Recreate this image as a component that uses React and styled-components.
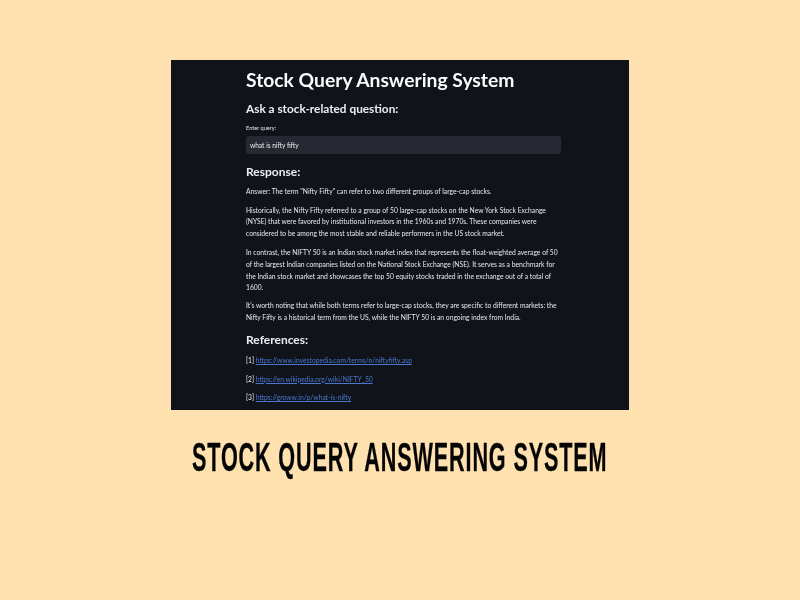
import React from "react";
import styled, { createGlobalStyle } from "styled-components";

const Global = createGlobalStyle`
  html, body { margin: 0; padding: 0; background: #ffe1af; }
  #root { width: 800px; height: 600px; }
`;

const Page = styled.div`
  width: 800px;
  height: 600px;
  background: #ffe1af;
  display: flex;
  flex-direction: column;
  align-items: center;
  padding-top: 60px;
  box-sizing: border-box;
  overflow: hidden;
`;

const Shot = styled.div`
  width: 458px;
  height: 350px;
  background: #11131a;
  overflow: hidden;
  display: flex;
  justify-content: center;
  font-family: "Lato", "Liberation Sans", sans-serif;
  color: #f2f3f5;
  flex: none;
`;

const Column = styled.div`
  width: 315px;
  margin-left: 7px;
  padding-top: 8px;
  display: flex;
  flex-direction: column;
  filter: blur(0.25px);
`;

const Title = styled.h1`
  margin: 0;
  font-size: 19.3px;
  line-height: 24px;
  font-weight: 700;
  color: #fbfbfc;
  white-space: nowrap;
`;

const Heading = styled.h2`
  margin: ${(p) => p.$top}px 0 0;
  font-size: ${(p) => p.$size}px;
  line-height: 18px;
  font-weight: 700;
  color: #eceef0;
  white-space: nowrap;
`;

const Label = styled.label`
  margin-top: 6px;
  font-size: 5.6px;
  line-height: 8px;
  color: #e4e5e8;
`;

const Field = styled.div`
  margin-top: 4px;
  height: 18px;
  border-radius: 3px;
  background: #272932;
  padding-left: 4px;
  font-size: 6.6px;
  line-height: 18px;
  color: #eeeff1;
`;

const Para = styled.p`
  margin: ${(p) => p.$top ?? 7}px 0 0;
  font-size: 6.74px;
  line-height: 11.6px;
  color: #e8e9ec;
  white-space: nowrap;
`;

const Link = styled.a`
  color: #4a78d0;
  text-decoration: underline;
`;

const Caption = styled.div`
  margin-top: 26px;
  font-family: "Liberation Sans", sans-serif;
  font-weight: 700;
  font-size: 40px;
  line-height: 42px;
  letter-spacing: 1.6px;
  color: #050505;
  white-space: nowrap;
  transform: scaleX(0.54);
  -webkit-text-stroke: 0.3px #050505;
`;

export default function App() {
  return (
    <Page>
      <Global />
      <Shot>
        <Column>
          <Title>Stock Query Answering System</Title>
          <Heading $top={8} $size={11.8}>Ask a stock-related question:</Heading>
          <Label>Enter query:</Label>
          <Field>what is nifty fifty</Field>
          <Heading $top={9} $size={12}>Response:</Heading>
          <Para $top={5}>Answer: The term "Nifty Fifty" can refer to two different groups of large-cap stocks.</Para>
          <Para>
            Historically, the Nifty Fifty referred to a group of 50 large-cap stocks on the New York Stock Exchange<br />
            (NYSE) that were favored by institutional investors in the 1960s and 1970s. These companies were<br />
            considered to be among the most stable and reliable performers in the US stock market.
          </Para>
          <Para $top={8}>
            In contrast, the NIFTY 50 is an Indian stock market index that represents the float-weighted average of 50<br />
            of the largest Indian companies listed on the National Stock Exchange (NSE). It serves as a benchmark for<br />
            the Indian stock market and showcases the top 50 equity stocks traded in the exchange out of a total of<br />
            1600.
          </Para>
          <Para $top={6.5}>
            It's worth noting that while both terms refer to large-cap stocks, they are specific to different markets: the<br />
            Nifty Fifty is a historical term from the US, while the NIFTY 50 is an ongoing index from India.
          </Para>
          <Heading $top={7.5} $size={12}>References:</Heading>
          <Para $top={6}>[1] <Link href="#">https://www.investopedia.com/terms/n/niftyfifty.asp</Link></Para>
          <Para>[2] <Link href="#">https://en.wikipedia.org/wiki/NIFTY_50</Link></Para>
          <Para>[3] <Link href="#">https://groww.in/p/what-is-nifty</Link></Para>
        </Column>
      </Shot>
      <Caption>STOCK QUERY ANSWERING SYSTEM</Caption>
    </Page>
  );
}
